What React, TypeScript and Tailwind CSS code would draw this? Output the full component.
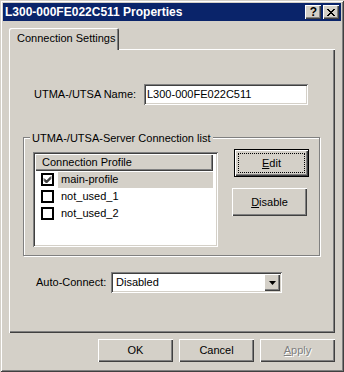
import type { ReactNode } from 'react'

const raised = 'shadow-[inset_1px_1px_#ffffff,inset_-1px_-1px_#404040,inset_-2px_-2px_#808080]'
const sunken = 'shadow-[inset_1px_1px_#808080,inset_-1px_-1px_#ffffff,inset_2px_2px_#404040,inset_-2px_-2px_#d4d0c8]'

const profiles = [
  { name: 'main-profile', checked: true, selected: true },
  { name: 'not_used_1', checked: false, selected: false },
  { name: 'not_used_2', checked: false, selected: false },
]

function Button({ children, className = '' }: { children: ReactNode; className?: string }) {
  return (
    <div className={`flex items-center justify-center bg-[#d4d0c8] ${raised} ${className}`}>
      {children}
    </div>
  )
}

function CheckBox({ checked }: { checked: boolean }) {
  return (
    <div className="w-[13px] h-[13px] border-2 border-black bg-white flex items-center justify-center">
      {checked && (
        <svg width="9" height="9" viewBox="0 0 9 9">
          <path d="M1 3.5 L3.5 6 L8 1.5 M1 4.5 L3.5 7 L8 2.5 M1 5.5 L3.5 8 L8 3.5" stroke="#000" strokeWidth="1" fill="none" />
        </svg>
      )}
    </div>
  )
}

export default function App() {
  return (
    <div className="w-[344px] h-[372px] bg-[#d4d0c8] p-[3px] text-[11px] text-black font-['Liberation_Sans',Arial,sans-serif] shadow-[inset_1px_1px_#d4d0c8,inset_-1px_-1px_#404040,inset_2px_2px_#ffffff,inset_-2px_-2px_#808080] flex flex-col">
      {/* title bar */}
      <div className="h-[18px] bg-[#0a246a] flex items-center pl-[2px] pr-[2px]">
        <span className="text-white font-bold text-[12px] flex-1 leading-none">L300-000FE022C511 Properties</span>
        <div className="flex gap-[2px]">
          <Button className="w-[16px] h-[14px]">
            <span className="font-bold text-[12px] leading-none pl-px">?</span>
          </Button>
          <Button className="w-[16px] h-[14px]">
            <svg width="8" height="7" viewBox="0 0 8 7">
              <path d="M0 0 L7 7 M1 0 L8 7 M7 0 L0 7 M8 0 L1 7" stroke="#000" strokeWidth="1" fill="none" />
            </svg>
          </Button>
        </div>
      </div>

      <div className="px-[6px] flex flex-col">
        {/* tab strip */}
        <div className="mt-[7px] h-[22px] flex items-end">
          <div className="w-[110px] h-[22px] rounded-tl-[2px] rounded-tr-[2px] shadow-[inset_1px_1px_#ffffff,inset_-1px_0_#404040,inset_-2px_0_#808080] flex items-center pl-[8px] pb-px">
            Connection Settings
          </div>
          <div className="flex-1 h-px bg-white" />
        </div>

        {/* tab panel */}
        <div className="h-[283px] flex flex-col pl-px shadow-[inset_1px_0_#ffffff,inset_-1px_-1px_#404040,inset_-2px_-2px_#808080]">
          <div className="mt-[34px] flex items-center">
            <span className="ml-[24px] w-[110px]">UTMA-/UTSA Name:</span>
            <div className={`w-[164px] h-[21px] bg-white ${sunken} flex items-center pl-[3px]`}>L300-000FE022C511</div>
          </div>

          {/* group box */}
          <div className="relative ml-[13px] mt-[32px] w-[297px] h-[119px] border border-[#808080] shadow-[inset_1px_1px_#ffffff,1px_1px_#ffffff] flex pl-[9px] pt-[11px]">
            <span className="absolute -top-[8px] left-[6px] px-[2px] bg-[#d4d0c8]">UTMA-/UTSA-Server Connection list</span>

            <div className={`mt-[3px] w-[185px] h-[95px] bg-white ${sunken} p-[2px]`}>
              <div className={`w-[178px] h-[17px] ${raised} bg-[#d4d0c8] flex items-center pl-[7px]`}>Connection Profile</div>
              {profiles.map((p) => (
                <div key={p.name} className="h-[17px] flex items-center">
                  <div className="ml-[6px] w-[17px]">
                    <CheckBox checked={p.checked} />
                  </div>
                  <div className={`w-[155px] h-[16px] flex items-center pl-[3px] ${p.selected ? 'bg-[#d4d0c8]' : ''}`}>{p.name}</div>
                </div>
              ))}
            </div>

            <div className="ml-[14px] flex flex-col">
              <div className="ml-[2px] w-[75px] h-[28px] border border-black">
                <Button className="w-full h-full relative">
                  <div className="absolute inset-[3px] border border-dotted border-black" />
                  <span><span className="underline">E</span>dit</span>
                </Button>
              </div>
              <Button className="mt-[11px] w-[75px] h-[28px]">
                <span><span className="underline">D</span>isable</span>
              </Button>
            </div>
          </div>

          <div className="mt-[16px] flex items-center">
            <span className="ml-[26px] w-[75px]">Auto-Connect:</span>
            <div className={`w-[171px] h-[21px] bg-white ${sunken} flex items-center p-[2px]`}>
              <span className="flex-1 pl-[3px]">Disabled</span>
              <Button className="w-[16px] h-[17px]">
                <svg width="7" height="4" viewBox="0 0 7 4">
                  <path d="M0 0 H7 L3.5 4 Z" fill="#000" />
                </svg>
              </Button>
            </div>
          </div>
        </div>

        {/* bottom buttons */}
        <div className="mt-[6px] flex justify-end gap-[6px]">
          <Button className="w-[75px] h-[23px]">OK</Button>
          <Button className="w-[75px] h-[23px]">Cancel</Button>
          <Button className="w-[75px] h-[23px] text-[#808080] [text-shadow:1px_1px_#ffffff]">
            <span><span className="underline">A</span>pply</span>
          </Button>
        </div>
      </div>
    </div>
  )
}
